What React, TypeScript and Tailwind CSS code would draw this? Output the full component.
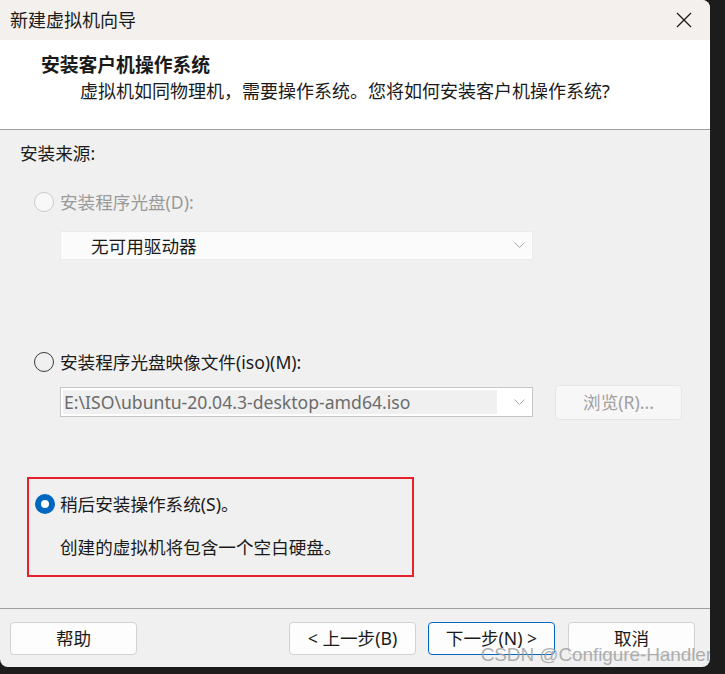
export default function App() {
  const chevron = (
    <svg width="11" height="7" viewBox="0 0 11 7" fill="none" stroke="#a8a8a8" strokeWidth="1">
      <polyline points="0.5 0.5 5.5 5.5 10.5 0.5" />
    </svg>
  );

  return (
    <div className="w-[725px] h-[674px] bg-[#1c1c1c] overflow-hidden font-['Noto_Sans','Noto_Sans_CJK_SC',sans-serif] text-[#1a1a1a]">
      <div className="relative w-[710px] h-[667px] flex flex-col rounded-tr-[8px] rounded-b-[8px] overflow-hidden bg-[#f0f0f0]">
        {/* Title bar */}
        <div className="h-[40px] shrink-0 bg-[#f3f0ed] flex items-center justify-between pl-[10px] pr-[18px]">
          <span className="text-[18px] leading-[24px]">新建虚拟机向导</span>
          <svg width="16" height="16" viewBox="0 0 16 16" stroke="#1a1a1a" strokeWidth="1.3">
            <line x1="1" y1="1" x2="15" y2="15" />
            <line x1="15" y1="1" x2="1" y2="15" />
          </svg>
        </div>

        {/* Header */}
        <div className="h-[90px] shrink-0 bg-white border-b border-[#a0a0a0] pt-[13px] pl-[41px]">
          <div className="text-[18.8px] leading-[24px] font-bold">安装客户机操作系统</div>
          <div className="text-[18px] leading-[24px] mt-[2px] ml-[39px]">
            虚拟机如同物理机，需要操作系统。您将如何安装客户机操作系统?
          </div>
        </div>

        {/* Body */}
        <div className="flex-1 pl-[20px] pt-[11px] text-[17.6px]">
          <div className="leading-[24px]">安装来源:</div>

          {/* Disc */}
          <div className="mt-[25px] h-[24px] flex items-center pl-[14px] gap-[6px]">
            <div className="w-[20px] h-[20px] rounded-full border border-[#cacaca] bg-[#f8f8f8]" />
            <span className="leading-[24px] text-[#9a9a9a]">安装程序光盘(D):</span>
          </div>
          <div className="mt-[17px] ml-[40px] w-[473px] h-[29px] bg-[#fbfbfb] border border-[#ebebeb] flex items-center justify-between pl-[30px] pr-[7px]">
            <span className="leading-[24px]">无可用驱动器</span>
            {chevron}
          </div>

          {/* ISO */}
          <div className="mt-[90px] h-[24px] flex items-center pl-[14px] gap-[6px]">
            <div className="w-[20px] h-[20px] rounded-full border border-[#3a3a3a]" />
            <span className="leading-[24px]">安装程序光盘映像文件(iso)(M):</span>
          </div>
          <div className="mt-[11px] ml-[40px] flex items-start">
            <div className="mt-[2px] w-[473px] h-[30px] bg-white border border-[#c6c6c6] flex items-center p-[2px] pr-[7px]">
              <div className="flex-1 h-full bg-[#f0f0f0] flex items-center pl-[1px] text-[#6b6b6b] leading-[24px]">
                E:\ISO\ubuntu-20.04.3-desktop-amd64.iso
              </div>
              <div className="w-[28px] flex justify-end">{chevron}</div>
            </div>
            <button className="ml-[22px] w-[127px] h-[35px] rounded-[4px] border border-[#e6e6e6] bg-[#f7f7f7] text-[#a0a0a0] text-[17.6px]">
              浏览(R)...
            </button>
          </div>

          {/* Later */}
          <div className="mt-[57px] ml-[7px] w-[387px] h-[100px] border-2 border-[#e8202a] pt-[13px] pl-[6px]">
            <div className="h-[24px] flex items-center gap-[5px]">
              <div className="w-[20px] h-[20px] rounded-full bg-[#0067c0] flex items-center justify-center">
                <div className="w-[8px] h-[8px] rounded-full bg-white" />
              </div>
              <span className="leading-[24px]">稍后安装操作系统(S)。</span>
            </div>
            <div className="mt-[19px] ml-[25px] leading-[24px]">创建的虚拟机将包含一个空白硬盘。</div>
          </div>
        </div>

        {/* Footer */}
        <div className="h-[59px] shrink-0 border-t border-[#a0a0a0] pt-[13px] pl-[10px] pr-[15px] flex items-start text-[17.6px]">
          <button className="w-[127px] h-[33px] rounded-[4px] border border-[#d2d2d2] bg-[#fdfdfd]">帮助</button>
          <div className="ml-auto flex">
            <button className="w-[127px] h-[33px] rounded-[4px] border border-[#d2d2d2] bg-[#fdfdfd]">&lt; 上一步(B)</button>
            <button className="ml-[12px] w-[127px] h-[33px] rounded-[4px] border border-[#0067c0] bg-[#fdfdfd]">下一步(N) &gt;</button>
            <button className="ml-[13px] w-[127px] h-[33px] rounded-[4px] border border-[#d2d2d2] bg-[#fdfdfd]">取消</button>
          </div>
        </div>

        {/* Watermark */}
        <div className="absolute right-[-2px] bottom-[0px] text-[19px] leading-[24px] text-[#a0a0a0]/85 font-['Liberation_Sans',sans-serif] tracking-[-0.1px] whitespace-nowrap">
          CSDN @Configure-Handler
        </div>
      </div>
    </div>
  );
}
